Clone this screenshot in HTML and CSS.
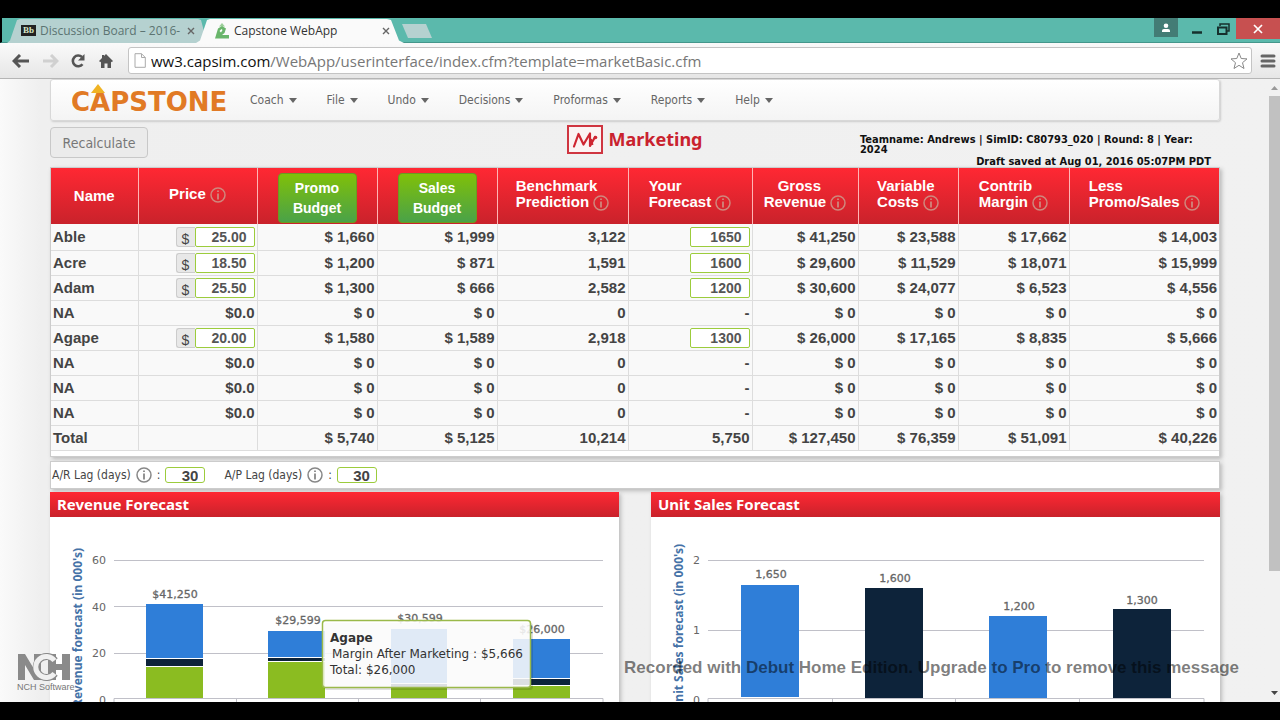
FILE: index.html
```html
<!DOCTYPE html>
<html lang="en">
<head>
<meta charset="utf-8">
<title>Capstone WebApp</title>
<link rel="stylesheet" href="styles.css">
</head>
<body>
<svg class="defs" aria-hidden="true">
  <symbol id="info" viewBox="0 0 16 16"><circle cx="8" cy="8" r="7" fill="none" stroke="currentColor" stroke-width="1.5"/><path d="M8 3.5v1.6M8 6.4v6" stroke="currentColor" stroke-width="1.8"/></symbol>
</svg>
<div class="screen">
  <header class="tabs">
    <div class="tab tab-back">
      <span class="bb">Bb</span><span class="tab-title">Discussion Board – 2016-</span>
      <button class="tab-close" aria-label="Close tab"><svg width="8" height="8" viewBox="0 0 8 8"><path d="M1 1l6 6M7 1l-6 6" stroke="currentColor" stroke-width="1.4"/></svg></button>
    </div>
    <div class="tab tab-front">
      <svg class="favicon" width="16" height="16" viewBox="0 0 16 16"><path d="M8 0l3 3.4H5z" fill="#9ccf9a"/><path d="M4 5.500l4-2.500 4 2.500-1.500 4.500L8 12h7v3.500H1z" fill="#69b56b"/><path d="M5.500 8l2-2 1 1-1.500 2.500z" fill="#fff"/></svg>
      <span class="tab-title">Capstone WebApp</span>
      <button class="tab-close" aria-label="Close tab"><svg width="8" height="8" viewBox="0 0 8 8"><path d="M1 1l6 6M7 1l-6 6" stroke="currentColor" stroke-width="1.4"/></svg></button>
    </div>
    <button class="new-tab" aria-label="New tab"></button>
    <div class="window-buttons">
      <button class="user" aria-label="User"><svg width="10" height="10" viewBox="0 0 10 10"><circle cx="5" cy="2.700" r="2.300" fill="#fff"/><path d="M1 9V7.500Q1 6 3 6h4q2 0 2 1.500V9z" fill="#fff"/></svg></button>
      <button class="win" aria-label="Minimize"><svg width="12" height="12" viewBox="0 0 12 12"><path d="M1 9.500h10" stroke="#16302d" stroke-width="2.500"/></svg></button>
      <button class="win" aria-label="Restore"><svg width="13" height="12" viewBox="0 0 13 12"><path d="M3 3V1h9v7h-2" fill="none" stroke="#16302d" stroke-width="1.500"/><path d="M1 4.500h8.500V11H1z" fill="none" stroke="#16302d" stroke-width="2"/></svg></button>
      <button class="win win-close" aria-label="Close"><svg width="10" height="10" viewBox="0 0 10 10"><path d="M1 1l8 8M9 1L1 9" stroke="#fff" stroke-width="1.700"/></svg></button>
    </div>
  </header>

  <div class="toolbar">
    <button class="tool" aria-label="Back"><svg width="18" height="14" viewBox="0 0 18 14"><path d="M8 1L2 7l6 6M2 7h15" fill="none" stroke="#555" stroke-width="3"/></svg></button>
    <button class="tool" aria-label="Forward"><svg width="18" height="14" viewBox="0 0 18 14"><path d="M10 1l6 6-6 6M16 7H2" fill="none" stroke="#d0d0d0" stroke-width="3"/></svg></button>
    <button class="tool" aria-label="Reload"><svg width="16" height="16" viewBox="0 0 16 16"><path d="M12.500 11.200A5.400 5.400 0 1 1 12 4" fill="none" stroke="#555" stroke-width="2.600"/><path d="M14.500 1v6.500H8z" fill="#555"/></svg></button>
    <button class="tool" aria-label="Home"><svg width="14" height="14" viewBox="0 0 14 14"><path d="M7 0l7 7-1.300 1.300L12 7.600V14H8.500V9.500h-3V14H2V7.600l-.7.7L0 7l3-3V1h2v1z" fill="#555"/></svg></button>
    <div class="address" role="textbox" aria-label="Address">
      <svg width="12" height="15" viewBox="0 0 12 15"><path d="M1 .700h6.500L11.300 4.500v9.800H1zM7.500.700v3.800h3.800" fill="#fff" stroke="#aaa"/></svg>
      <span class="url"><span class="host">ww3.capsim.com</span>/WebApp/userinterface/index.cfm?template=marketBasic.cfm</span>
      <svg width="18" height="18" viewBox="0 0 18 18"><path d="M9 1l2.200 5.500 5.800.400-4.500 3.800 1.500 5.800L9 13.300 4 16.500l1.500-5.800L1 6.900l5.800-.400z" fill="#fff" stroke="#888"/></svg>
    </div>
    <button class="menu" aria-label="Menu"><svg width="16" height="14" viewBox="0 0 16 14"><path d="M2 2h12M2 7h12M2 12h12" stroke="#666" stroke-width="3" stroke-linecap="round"/></svg></button>
  </div>

  <div class="viewport">
    <main class="page">
      <nav class="nav">
        <svg class="logo" width="164" height="34" viewBox="0 0 164 34" role="img" aria-label="Capstone"><text x="-1" y="28">CAPSTONE</text><path d="M26 1l7 9h-14z" fill="#f0b323"/></svg>
        <button>Coach</button><button>File</button><button>Undo</button><button>Decisions</button><button>Proformas</button><button>Reports</button><button>Help</button>
      </nav>

      <div class="titlebar">
        <button class="recalc">Recalculate</button>
        <h1><svg width="36" height="29" viewBox="0 0 36 29"><rect x="1" y="1" width="34" height="27" fill="#fbf3f3" stroke="#cf3540" stroke-width="2"/><path d="M7 21.500L11.500 9l5 10.500L23 8.500v12.500l5-9" fill="none" stroke="#cf2531" stroke-width="2.200" stroke-linejoin="round" stroke-linecap="round"/><path d="M24 14l1.500 6" stroke="#cf2531" stroke-width="2"/><circle cx="28.500" cy="12.500" r="1.800" fill="#cf2531"/></svg>Marketing</h1>
        <div class="status"><p>Teamname: Andrews | SimID: C80793_020 | Round: 8 | Year: 2024</p><p class="saved">Draft saved at Aug 01, 2016 05:07PM PDT</p></div>
      </div>

      <section class="card table-card">
        <table>
          <colgroup><col class="c-name"><col class="c-price"><col class="c-promo"><col class="c-sales"><col class="c-bench"><col class="c-fore"><col class="c-gross"><col class="c-var"><col class="c-contrib"><col></colgroup>
          <thead><tr>
            <th>Name</th>
            <th><span class="head">Price <svg class="info"><use href="#info"/></svg></span></th>
            <th><button class="green">Promo<br>Budget</button></th>
            <th><button class="green">Sales<br>Budget</button></th>
            <th><span class="head">Benchmark<br>Prediction <svg class="info"><use href="#info"/></svg></span></th>
            <th><span class="head">Your<br>Forecast <svg class="info"><use href="#info"/></svg></span></th>
            <th><span class="head"><span class="mid">Gross</span>Revenue <svg class="info"><use href="#info"/></svg></span></th>
            <th><span class="head">Variable<br>Costs <svg class="info"><use href="#info"/></svg></span></th>
            <th><span class="head">Contrib<br>Margin <svg class="info"><use href="#info"/></svg></span></th>
            <th><span class="head">Less<br>Promo/Sales <svg class="info"><use href="#info"/></svg></span></th>
          </tr></thead>
          <tbody>
            <tr><td>Able</td><td><label class="money"><span>$</span><input value="25.00" aria-label="Able price"></label></td><td>$ 1,660</td><td>$ 1,999</td><td>3,122</td><td><input value="1650" aria-label="Able forecast"></td><td>$ 41,250</td><td>$ 23,588</td><td>$ 17,662</td><td>$ 14,003</td></tr>
            <tr><td>Acre</td><td><label class="money"><span>$</span><input value="18.50" aria-label="Acre price"></label></td><td>$ 1,200</td><td>$ 871</td><td>1,591</td><td><input value="1600" aria-label="Acre forecast"></td><td>$ 29,600</td><td>$ 11,529</td><td>$ 18,071</td><td>$ 15,999</td></tr>
            <tr><td>Adam</td><td><label class="money"><span>$</span><input value="25.50" aria-label="Adam price"></label></td><td>$ 1,300</td><td>$ 666</td><td>2,582</td><td><input value="1200" aria-label="Adam forecast"></td><td>$ 30,600</td><td>$ 24,077</td><td>$ 6,523</td><td>$ 4,556</td></tr>
            <tr><td>NA</td><td>$0.0</td><td>$ 0</td><td>$ 0</td><td>0</td><td>-</td><td>$ 0</td><td>$ 0</td><td>$ 0</td><td>$ 0</td></tr>
            <tr><td>Agape</td><td><label class="money"><span>$</span><input value="20.00" aria-label="Agape price"></label></td><td>$ 1,580</td><td>$ 1,589</td><td>2,918</td><td><input value="1300" aria-label="Agape forecast"></td><td>$ 26,000</td><td>$ 17,165</td><td>$ 8,835</td><td>$ 5,666</td></tr>
            <tr><td>NA</td><td>$0.0</td><td>$ 0</td><td>$ 0</td><td>0</td><td>-</td><td>$ 0</td><td>$ 0</td><td>$ 0</td><td>$ 0</td></tr>
            <tr><td>NA</td><td>$0.0</td><td>$ 0</td><td>$ 0</td><td>0</td><td>-</td><td>$ 0</td><td>$ 0</td><td>$ 0</td><td>$ 0</td></tr>
            <tr><td>NA</td><td>$0.0</td><td>$ 0</td><td>$ 0</td><td>0</td><td>-</td><td>$ 0</td><td>$ 0</td><td>$ 0</td><td>$ 0</td></tr>
            <tr><td>Total</td><td></td><td>$ 5,740</td><td>$ 5,125</td><td>10,214</td><td>5,750</td><td>$ 127,450</td><td>$ 76,359</td><td>$ 51,091</td><td>$ 40,226</td></tr>
          </tbody>
        </table>
      </section>

      <section class="card lags">
        <label>A/R Lag (days) <svg class="info"><use href="#info"/></svg> : <input value="30"></label>
        <label>A/P Lag (days) <svg class="info"><use href="#info"/></svg> : <input value="30"></label>
      </section>

      <div class="charts">
        <section class="card chart">
          <h2>Revenue Forecast</h2>
          <svg viewBox="50 517 569 186">
            <path d="M114 560.500h489M114 606.500h489M114 653.500h489M114 698.500h489v6M114 698.500v6M236.500 698.500v6M358.500 698.500v6M480.500 698.500v6" class="grid"/>
            <g class="axis"><text x="106" y="564">60</text><text x="106" y="611">40</text><text x="106" y="657">20</text><text x="106" y="704">0</text></g>
            <text class="axis-title" transform="translate(82 548) rotate(-90)">Revenue forecast (in 000's)</text>
            <path class="blue" d="M146 604h57v54h-57zM268 631h57v26h-57zM391 629h56v54h-56zM513 639h57v39h-57z"/>
            <path class="navy" d="M146 659h57v7h-57zM268 658h57v3h-57zM391 684h56v3h-56zM513 679h57v6h-57z"/>
            <path class="lime" d="M146 667h57v31h-57zM268 662h57v36h-57zM391 688h56v10h-56zM513 686h57v12h-57z"/>
            <g class="value"><text x="175" y="598">$41,250</text><text x="298" y="624">$29,599</text><text x="420" y="622">$30,599</text><text x="542" y="633">$26,000</text></g>
            <rect x="324" y="623" width="209" height="67" rx="3" fill="#000" opacity=".12"/>
            <rect x="322.500" y="620.500" width="208" height="67" rx="3" fill="#fff" fill-opacity=".86" stroke="#9ab94a" stroke-width="1.500"/>
            <g class="tip"><text x="330" y="642" class="strong">Agape</text><text x="332" y="658">Margin After Marketing : $5,666</text><text x="330" y="674">Total: $26,000</text></g>
          </svg>
        </section>
        <section class="card chart">
          <h2>Unit Sales Forecast</h2>
          <svg viewBox="651 517 569 186">
            <path d="M708 560.500h496M708 630.500h496M708 698.500h496v6M708 698.500v6M832.500 698.500v6M955.500 698.500v6M1079.500 698.500v6" class="grid"/>
            <g class="axis"><text x="700" y="564">2</text><text x="700" y="634">1</text><text x="700" y="704">0</text></g>
            <text class="axis-title" transform="translate(683 544) rotate(-90)">Unit Sales forecast (in 000's)</text>
            <path class="blue" d="M741 585h58v112h-58zM989 616h58v82h-58z"/>
            <path class="navy" d="M865 588h58v110h-58zM1113 609h58v89h-58z"/>
            <g class="value"><text x="771" y="578">1,650</text><text x="895" y="582">1,600</text><text x="1019" y="610">1,200</text><text x="1142" y="604">1,300</text></g>
          </svg>
        </section>
      </div>
    </main>
    <div class="scrollbar" aria-hidden="true">
      <svg width="7" height="4" viewBox="0 0 7 4"><path d="M0 4l3.500-4L7 4z" fill="#999"/></svg>
      <div class="thumb"></div>
      <svg width="7" height="4" viewBox="0 0 7 4"><path d="M0 0l3.500 4L7 0z" fill="#444"/></svg>
    </div>
  </div>

  <div class="brand"><svg width="54" height="28" viewBox="0 0 54 28" role="img" aria-label="NCH"><path d="M1 1h7l9 15V1h7v26h-7L8 12v15H1zM31 1h8v10h6V1h8v26h-8V17h-6v10h-8z" fill="#8a8a8a"/><path d="M38 7.500A10.500 10.500 0 1 0 38 20.500" fill="none" stroke="#8a8a8a" stroke-width="7"/><path d="M37.500 7.500A10.500 10.500 0 1 0 37.500 20.500" fill="none" stroke="#f0f0f0" stroke-width="5"/></svg><span>NCH Software</span></div>
  <p class="notice">Recorded with Debut Home Edition. Upgrade to Pro to remove this message</p>
</div>
</body>
</html>
```
FILE: styles.css
```css
* { box-sizing: border-box; }
body { margin: 0; background: #000; font-family: "DejaVu Sans Condensed", "DejaVu Sans", sans-serif; font-stretch: condensed; color: #444; }
button { font: inherit; color: inherit; border: 0; padding: 0; background: none; }
h1, h2, p { margin: 0; }
svg { display: block; flex: none; }
.defs { position: absolute; width: 0; height: 0; }
.screen { position: relative; display: flex; flex-direction: column; height: 100vh; border: solid #000; border-width: 18px 0; overflow: hidden; background: #f1f1f1; }

.tabs { display: flex; height: 25px; flex: none; padding-left: 5px; background: #5bb9ac; border-left: 2px solid #000; border-bottom: 1px solid #45978c; font: 12px "Open Sans", sans-serif; font-stretch: normal; }
.tab { display: flex; align-items: center; height: 25px; gap: 4px; }
.tab-back { width: 200px; padding: 0 12px 0 14px; background: #b5d1d0; color: #5c7472; clip-path: polygon(0 100%, 3px 90%, 10px 8%, 13px 4%, 191px 4%, 194px 8%, 200px 100%); }
.tab-front { width: 208px; margin-left: -11px; padding: 0 14px 0 18px; background: #fafafa; color: #333; clip-path: polygon(0 100%, 4px 90%, 11px 8%, 14px 4%, 191px 4%, 195px 8%, 203px 90%, 208px 100%); }
.tab-title { flex: 1; white-space: nowrap; overflow: hidden; }
.tab-close { color: #666; }
.bb { width: 15px; height: 11px; background: #222; color: #d8e8c8; font: bold 9px/11px "Liberation Serif", serif; text-align: center; }
.new-tab { width: 30px; height: 14px; margin: 6px 0 0 -2px; background: #b5d1d0; clip-path: polygon(0 0, 24px 0, 30px 100%, 6px 100%); }
.window-buttons { display: flex; margin-left: auto; align-items: flex-start; }
.user { width: 24px; height: 19px; margin-right: 6px; background: #437c75; display: grid; place-items: center; }
.win { width: 26px; height: 21px; display: grid; place-items: center; }
.win-close { width: 44px; background: #c75050; }

.toolbar { display: flex; align-items: center; flex: none; height: 36px; padding: 0 4px 0 12px; background: linear-gradient(#fafafa, #e6e6e6); border-bottom: 1px solid #b5b5b5; }
.tool { width: 29px; height: 28px; display: grid; place-items: center start; }
.address { display: flex; align-items: center; flex: 1; gap: 5px; height: 27px; padding: 0 3px 0 5px; background: #fff; border: 1px solid #c4c4c4; border-radius: 3px; font: 15px "Open Sans", sans-serif; color: #777; font-stretch: normal; }
.url { flex: 1; white-space: nowrap; overflow: hidden; }
.host { color: #111; }
.menu { margin-left: 8px; }

.viewport { display: flex; flex: 1; min-height: 0; background: linear-gradient(90deg, #fafafa, #efefef 40px, #f1f1f1); }
.page { flex: 1; min-width: 0; padding: 0 49px 0 50px; overflow: hidden; }
.scrollbar { display: flex; flex-direction: column; align-items: center; width: 11px; padding: 7px 0; gap: 6px; background: #f1f1f1; }
.thumb { width: 100%; height: 475px; background: #c1c1c1; margin-bottom: auto; }

.nav { display: flex; align-items: center; gap: 30px; height: 42px; padding-left: 21px; border: 1px solid #d8d8d8; border-radius: 3px; background: linear-gradient(#fff, #f4f4f4); box-shadow: 1px 1px 2px #ccc; font-size: 12px; color: #666; }
.nav button { display: flex; align-items: center; gap: 5px; }
.nav button::after { content: ""; border: solid transparent; border-width: 5px 4px 0; border-top-color: #666; }
.logo { margin-right: -16px; }
.logo text { font: bold 26px "DejaVu Sans", sans-serif; font-stretch: normal; fill: #e17a25; }

.titlebar { display: flex; justify-content: space-between; align-items: flex-start; height: 46px; overflow: hidden; }
.recalc { width: 98px; height: 31px; margin-top: 6px; border: 1px solid #c8c8c8; border-radius: 4px; background: #ebebeb; color: #777; font-size: 14px; }
.titlebar h1 { display: flex; align-items: center; gap: 6px; margin: 2px 0 0 261px; font: bold 18px/32px "Noto Sans", sans-serif; font-stretch: normal; color: #c9222e; }
.status { width: 360px; padding-top: 14px; font: bold 11px/10px "DejaVu Sans Condensed", sans-serif; font-stretch: condensed; color: #111; }
.saved { margin-top: 2px; padding-right: 9px; text-align: right; }

.card { background: #fff; border: 1px solid #ccc; box-shadow: 2px 2px 4px #bbb; }
.table-card { height: 290px; font-family: "Liberation Sans", sans-serif; font-stretch: normal; }
table { width: 100%; table-layout: fixed; border-collapse: collapse; font-size: 15px; font-weight: bold; }
thead { background: linear-gradient(#ff2833, #c9222b); color: #fff; }
th { height: 56px; padding: 0; line-height: 16px; border-left: 1px solid #ffb5b5; }
th:first-child, td:first-child { border-left: 0; }
td { height: 25px; padding: 0 2px; line-height: 24px; text-align: right; border-left: 1px solid #ddd; border-bottom: 1px solid #ddd; background: #f9f9f9; }
tbody tr:first-child td { height: 26px; }
td:first-child { text-align: left; }
.c-name { width: 87px; } .c-price { width: 119px; } .c-promo { width: 120px; } .c-sales { width: 120px; } .c-bench { width: 131px; } .c-fore { width: 124px; } .c-gross { width: 106px; } .c-var { width: 100px; } .c-contrib { width: 111px; }
.head { display: inline-block; padding-bottom: 3px; text-align: left; }
.mid { display: block; padding-left: 14px; }
.info { display: inline-block; width: 16px; height: 16px; vertical-align: -4px; color: #d0877d; }
.green { width: 79px; height: 50px; margin-top: 3px; border: 1px solid #6b9b20; border-radius: 4px; background: linear-gradient(#80c009, #4aa248); font-size: 14px; font-weight: bold; line-height: 20px; color: #fff; vertical-align: middle; }
input { display: block; width: 60px; height: 20px; margin-left: auto; padding: 0 7px; border: 1px solid #9ccc3c; border-radius: 2px; background: #fff; font: bold 14px "Liberation Sans", sans-serif; color: #555; text-align: right; }
.money { display: flex; justify-content: flex-end; }
.money input { margin: 0; }
.money span { width: 19px; height: 20px; border: 1px solid #ccc; border-right: 0; border-radius: 3px 0 0 3px; background: #e8e8e8; font-size: 14px; font-weight: normal; line-height: 22px; text-align: center; }

.lags { display: flex; align-items: center; gap: 19px; height: 28px; margin-top: 4px; padding-left: 1px; font-size: 12px; }
.lags label { display: flex; align-items: center; gap: 5px; }
.lags .info { color: #888; }
.lags input { width: 40px; height: 16px; padding: 0 6px; font-size: 15px; border-radius: 3px; color: #444; }

.charts { display: grid; grid-template-columns: 1fr 1fr; gap: 32px; margin-top: 3px; }
.chart { border-width: 0; }
.chart h2 { height: 25px; padding-left: 7px; background: linear-gradient(#ff2833, #c9222b); font: bold 15px/25px "Noto Sans", sans-serif; font-stretch: normal; color: #fff; }
.chart svg { width: 100%; font: 12px "DejaVu Sans", sans-serif; font-stretch: normal; }
.grid { fill: none; stroke: #c0c0c8; }
.axis { font-size: 11px; text-anchor: end; fill: #666; }
.axis-title { font: bold 12px "Noto Sans", sans-serif; text-anchor: end; fill: #4572a7; }
.value { font-size: 11px; text-anchor: middle; fill: #666; stroke: #666; stroke-width: .3px; }
.blue { fill: #2f7ed8; } .navy { fill: #0d233a; } .lime { fill: #8bbc21; }
.tip { font-size: 12px; fill: #333; }
.strong { font-weight: bold; }

.brand { position: absolute; left: 17px; bottom: 9px; font: 9px/12px "Liberation Sans", sans-serif; color: #777; }
.notice { position: absolute; right: 41px; bottom: 24px; font: bold 17px/20px "Liberation Sans", sans-serif; color: rgba(0, 0, 0, .52); }
```
